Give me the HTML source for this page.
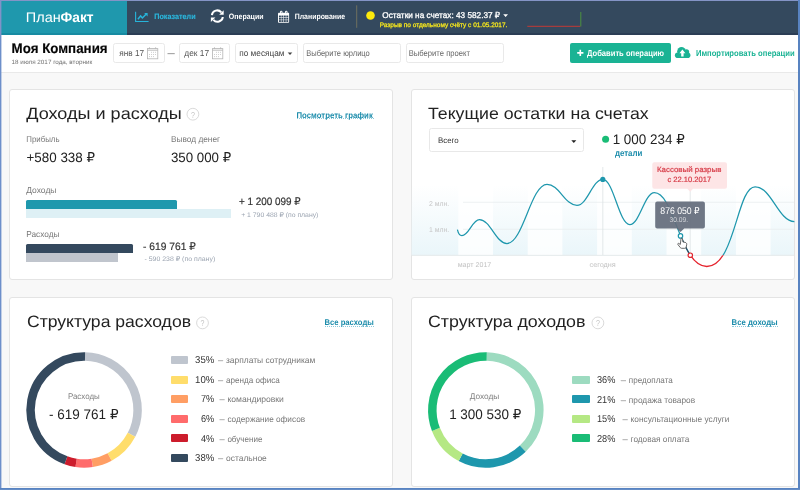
<!DOCTYPE html>
<html lang="ru"><head><meta charset="utf-8"><title>ПланФакт</title>
<style>
html,body{margin:0;padding:0}
body{width:800px;height:490px;overflow:hidden;position:relative;background:#f8f8f8;font-family:"Liberation Sans","DejaVu Sans",sans-serif}
.abs{position:absolute}
#hdr-logo{left:0;top:0;width:127px;height:35px;background:linear-gradient(180deg,#1f98ad 0,#1f98ad 33.3px,#178ba2 33.3px,#178ba2 34.8px,#8fc9d4 35px)}
#hdr-nav{left:127px;top:0;width:673px;height:35px;background:linear-gradient(180deg,#34495e 0,#34495e 33.3px,#2b3d55 33.3px,#2b3d55 34.8px,#98a1ad 35px)}
#sub{left:0;top:35px;width:800px;height:37px;background:#fff;border-bottom:1px solid #e9e9e9}
.box{position:absolute;top:43px;height:17.7px;border:1px solid #e9e9e9;border-radius:2.5px;background:#fff;box-sizing:content-box}
#btn-add{left:570px;top:43px;width:101px;height:19.5px;background:#1ab394;border-radius:2px}
.card{position:absolute;background:#fff;border:1px solid #e4e4e4;border-radius:3px;box-sizing:border-box}
.bar{position:absolute}
.dash{position:absolute;height:0;border-top:1px dotted #8ccadc}
.sw{position:absolute;width:17.5px;height:8.2px;border-radius:1px}
#sel{left:429.2px;top:127.7px;width:155.2px;height:24.5px;border:1px solid #e8e8e8;border-radius:2.5px;box-sizing:border-box;background:#fff}
.t{position:absolute;white-space:pre;display:block;transform-origin:0 0}
#gfx{position:absolute;left:0;top:0}
.fr{position:absolute;z-index:10}

</style></head>
<body>

<div class="abs" id="hdr-logo"></div>
<div class="abs" id="hdr-nav"></div>
<div class="abs" id="sub"></div>
<div class="box" style="left:113px;width:50px"></div>
<div class="box" style="left:178.5px;width:49.5px"></div>
<div class="box" style="left:235px;width:60.5px"></div>
<div class="box" style="left:302.5px;width:96.5px"></div>
<div class="box" style="left:405.5px;width:96.5px"></div>
<div class="abs" id="btn-add"></div>

<div class="card" style="left:9px;top:89px;width:384px;height:190.5px"></div>
<div class="card" style="left:410.5px;top:89px;width:384px;height:190.5px"></div>
<div class="card" style="left:9px;top:297px;width:384px;height:190px"></div>
<div class="card" style="left:410.5px;top:297px;width:384px;height:190px"></div>

<div class="bar" style="left:26px;top:200px;width:151px;height:9px;background:#1f98ad;border-radius:1.5px 1.5px 0 0"></div>
<div class="bar" style="left:26px;top:209px;width:204.5px;height:8.5px;background:#def0f5"></div>
<div class="bar" style="left:26px;top:244.2px;width:107px;height:8.8px;background:#34495e;border-radius:1.5px 1.5px 0 0"></div>
<div class="bar" style="left:26px;top:253px;width:92px;height:8.5px;background:#c0c5cd"></div>

<div class="dash" style="left:296.5px;top:117.8px;width:77px"></div>
<div class="dash" style="left:324.5px;top:325.8px;width:49.3px"></div>
<div class="dash" style="left:731.6px;top:325.8px;width:46px"></div>

<div class="abs" id="sel"></div>

<div class="sw" style="left:170.5px;top:356px;background:#bfc5ce"></div>
<div class="sw" style="left:170.5px;top:375.5px;background:#ffdd6b"></div>
<div class="sw" style="left:170.5px;top:395px;background:#ff9e64"></div>
<div class="sw" style="left:170.5px;top:414.8px;background:#ff6b6b"></div>
<div class="sw" style="left:170.5px;top:434.3px;background:#cc1c2c"></div>
<div class="sw" style="left:170.5px;top:453.8px;background:#34495e"></div>

<div class="sw" style="left:572px;top:375.5px;background:#9ddbc0"></div>
<div class="sw" style="left:572px;top:395.2px;background:#1e97ad"></div>
<div class="sw" style="left:572px;top:414.6px;background:#b5e884"></div>
<div class="sw" style="left:572px;top:434.3px;background:#1abc76"></div>

<svg id="gfx" width="800" height="490" viewBox="0 0 800 490">
<defs>
<linearGradient id="cg" x1="0" y1="0" x2="0" y2="1"><stop offset="0" stop-color="#eaf6fa" stop-opacity="0"/><stop offset="1" stop-color="#eaf6fa" stop-opacity="1"/></linearGradient>
<clipPath id="below"><rect x="689" y="255.3" width="40" height="20"/></clipPath>
<clipPath id="notred"><path d="M400 150H800V300H400Z M689 255.3H729V275.3H689Z" clip-rule="evenodd"/></clipPath>
<clipPath id="mid"><rect x="680" y="236" width="11" height="19.5"/></clipPath>
</defs>
<!-- header icons -->
<g fill="none" stroke="#27b4da" stroke-width="1.1">
<path d="M135.6 11.8V21.5H148.6"/>
<path d="M137.9 19.2L140.6 15.9L142.4 18L146 14.2" stroke-width="1.5"/>
<path d="M144.2 13H147.6V16.4Z" fill="#27b4da" stroke="none"/>
</g>
<g fill="none" stroke="#fff" stroke-width="2">
<path d="M211.9 15.2A5.3 5.3 0 0 1 221.3 12.4"/>
<path d="M222.8 17A5.3 5.3 0 0 1 213.4 19.8"/>
<path d="M223.7 10.2V14.7H219.2Z" fill="#fff" stroke="none"/>
<path d="M210.9 22V17.5H215.4Z" fill="#fff" stroke="none"/>
</g>
<g>
<rect x="278" y="12.7" width="11.1" height="10.1" rx="0.8" fill="#fff"/>
<rect x="280.0" y="10.7" width="2.5" height="3.4" rx="1.2" fill="#fff"/>
<rect x="285.0" y="10.7" width="2.5" height="3.4" rx="1.2" fill="#fff"/>
<rect x="280.9" y="11.6" width="0.7" height="1.6" rx="0.35" fill="#34495e" opacity="0.8"/>
<rect x="285.9" y="11.6" width="0.7" height="1.6" rx="0.35" fill="#34495e" opacity="0.8"/>
<rect x="278.95" y="15.55" width="1.95" height="1.8" fill="#34495e"/><rect x="281.40" y="15.55" width="1.95" height="1.8" fill="#34495e"/><rect x="283.85" y="15.55" width="1.95" height="1.8" fill="#34495e"/><rect x="286.30" y="15.55" width="1.95" height="1.8" fill="#34495e"/><rect x="278.95" y="17.85" width="1.95" height="1.8" fill="#34495e"/><rect x="281.40" y="17.85" width="1.95" height="1.8" fill="#34495e"/><rect x="283.85" y="17.85" width="1.95" height="1.8" fill="#34495e"/><rect x="286.30" y="17.85" width="1.95" height="1.8" fill="#34495e"/><rect x="278.95" y="20.15" width="1.95" height="1.8" fill="#34495e"/><rect x="281.40" y="20.15" width="1.95" height="1.8" fill="#34495e"/><rect x="283.85" y="20.15" width="1.95" height="1.8" fill="#34495e"/><rect x="286.30" y="20.15" width="1.95" height="1.8" fill="#34495e"/>
</g>
<path d="M356.7 5.3V27.8" stroke="#6f705f" stroke-width="1"/>
<circle cx="370.5" cy="15.5" r="4.3" fill="#fdea0c"/>
<path d="M503.2 14.3H508L505.6 16.9Z" fill="#fff"/>
<path d="M527.3 26.3H580.3" stroke="#c23a35" stroke-width="1"/>
<path d="M580.8 12V26.5" stroke="#4f9a3c" stroke-width="0.9"/>
<!-- subheader icons -->
<g transform="translate(147.10 48.20)" fill="none" stroke="#b4b4b4" stroke-width="0.8"><rect x="0.4" y="0.4" width="10.3" height="10.2"/><path d="M0.4 2.0H10.7" stroke-width="0.9"/><path d="M2.4 -0.9V0.6M8.5 -0.9V0.6" stroke-width="0.8"/><g fill="#cfcfcf" stroke="none"><rect x="3.9" y="3.6" width="1" height="1"/><rect x="5.9" y="3.6" width="1" height="1"/><rect x="7.9" y="3.6" width="1" height="1"/><rect x="1.9" y="5.8" width="1" height="1"/><rect x="3.9" y="5.8" width="1" height="1"/><rect x="5.9" y="5.8" width="1" height="1"/><rect x="7.9" y="5.8" width="1" height="1"/><rect x="1.9" y="7.9" width="1" height="1"/><rect x="3.9" y="7.9" width="1" height="1"/><rect x="5.9" y="7.9" width="1" height="1"/></g></g>
<g transform="translate(212.10 48.20)" fill="none" stroke="#b4b4b4" stroke-width="0.8"><rect x="0.4" y="0.4" width="10.3" height="10.2"/><path d="M0.4 2.0H10.7" stroke-width="0.9"/><path d="M2.4 -0.9V0.6M8.5 -0.9V0.6" stroke-width="0.8"/><g fill="#cfcfcf" stroke="none"><rect x="3.9" y="3.6" width="1" height="1"/><rect x="5.9" y="3.6" width="1" height="1"/><rect x="7.9" y="3.6" width="1" height="1"/><rect x="1.9" y="5.8" width="1" height="1"/><rect x="3.9" y="5.8" width="1" height="1"/><rect x="5.9" y="5.8" width="1" height="1"/><rect x="7.9" y="5.8" width="1" height="1"/><rect x="1.9" y="7.9" width="1" height="1"/><rect x="3.9" y="7.9" width="1" height="1"/><rect x="5.9" y="7.9" width="1" height="1"/></g></g>
<path d="M287.7 52.6H292.3L290 55Z" fill="#444"/>
<path d="M577.2 52.9H583.4M580.3 49.8V56" stroke="#fff" stroke-width="1.6"/>
<g fill="#1ab394">
<circle cx="681.5" cy="51.2" r="4.3"/><circle cx="686.5" cy="51.9" r="2.7"/>
<rect x="674.9" y="52.4" width="15.5" height="5.7" rx="2.8"/>
</g>
<path d="M682.4 49.6L685.4 53.2H683.6V56.5H681.2V53.2H679.4Z" fill="#fff"/>
<!-- ? icons -->
<circle cx="192.9" cy="114.2" r="5.9" fill="none" stroke="#d0d0d0" stroke-width="0.8"/>
<circle cx="202.5" cy="322.9" r="5.9" fill="none" stroke="#d0d0d0" stroke-width="0.8"/>
<circle cx="597.9" cy="322.9" r="5.9" fill="none" stroke="#d0d0d0" stroke-width="0.8"/>
<!-- select caret -->
<path d="M571.3 140.2H576.3L573.8 143Z" fill="#222"/>
<circle cx="605.6" cy="139.3" r="3.5" fill="#1abc76"/>
<!-- chart -->
<rect x="411.5" y="185" width="382.5" height="70.3" fill="url(#cg)"/>
<rect x="458.3" y="185" width="34.7" height="70.3" fill="#fff" opacity="0.8"/><rect x="527.7" y="185" width="34.7" height="70.3" fill="#fff" opacity="0.8"/><rect x="597.1" y="185" width="34.7" height="70.3" fill="#fff" opacity="0.8"/><rect x="666.5" y="185" width="34.7" height="70.3" fill="#fff" opacity="0.8"/><rect x="735.9" y="185" width="34.7" height="70.3" fill="#fff" opacity="0.8"/>
<path d="M463 202.3H794M463 229.3H794" stroke="#e9eef0" stroke-width="0.8"/>
<path d="M411.5 255.4H794" stroke="#e3e8ea" stroke-width="0.9"/>
<path d="M602.8 167V255" stroke="#dde2e4" stroke-width="0.8"/>
<path d="M690.2 189V255" stroke="#dde2e4" stroke-width="0.8"/>
<path d="M457.4 229.6 C458.2 233 459.6 235.6 461.9 235.6 C468.90 235.60 472.40 219.60 479.40 219.60 C490.44 219.60 495.96 243.50 507.00 243.50 C523.00 243.50 531.00 184.30 547.00 184.30 C559.00 184.30 565.00 205.40 577.00 205.40 C587.32 205.40 592.48 179.40 602.80 179.40 C613.60 179.40 619.00 224.50 629.80 224.50 C639.64 224.50 644.56 192.70 654.40 192.70 C674.31 192.70 680.08 266.50 706.80 266.50 C735.30 266.50 736.75 186.80 755.10 186.80 C771.61 186.80 777.89 221.00 794.40 221.60" fill="none" stroke="#1e97ad" stroke-width="1.25" clip-path="url(#notred)"/>
<path d="M457.4 229.6 C458.2 233 459.6 235.6 461.9 235.6 C468.90 235.60 472.40 219.60 479.40 219.60 C490.44 219.60 495.96 243.50 507.00 243.50 C523.00 243.50 531.00 184.30 547.00 184.30 C559.00 184.30 565.00 205.40 577.00 205.40 C587.32 205.40 592.48 179.40 602.80 179.40 C613.60 179.40 619.00 224.50 629.80 224.50 C639.64 224.50 644.56 192.70 654.40 192.70 C674.31 192.70 680.08 266.50 706.80 266.50 C735.30 266.50 736.75 186.80 755.10 186.80 C771.61 186.80 777.89 221.00 794.40 221.60" fill="none" stroke="#34495e" stroke-width="1.15" clip-path="url(#mid)"/>
<path d="M457.4 229.6 C458.2 233 459.6 235.6 461.9 235.6 C468.90 235.60 472.40 219.60 479.40 219.60 C490.44 219.60 495.96 243.50 507.00 243.50 C523.00 243.50 531.00 184.30 547.00 184.30 C559.00 184.30 565.00 205.40 577.00 205.40 C587.32 205.40 592.48 179.40 602.80 179.40 C613.60 179.40 619.00 224.50 629.80 224.50 C639.64 224.50 644.56 192.70 654.40 192.70 C674.31 192.70 680.08 266.50 706.80 266.50 C735.30 266.50 736.75 186.80 755.10 186.80 C771.61 186.80 777.89 221.00 794.40 221.60" fill="none" stroke="#e5242e" stroke-width="1.3" clip-path="url(#below)"/>
<circle cx="602.8" cy="179.4" r="2.6" fill="#1e97ad"/>
<!-- red tooltip -->
<path d="M654.3 162.2H725a2 2 0 0 1 2 2V186.8a2 2 0 0 1 -2 2H693L690.2 191.8L687.4 188.8H654.3a2 2 0 0 1 -2 -2V164.2a2 2 0 0 1 2 -2Z" fill="#fde5e6"/>
<!-- gray tooltip -->
<path d="M657.2 201.5H702.9a2 2 0 0 1 2 2V226.6a2 2 0 0 1 -2 2H684.2L680.5 232L676.8 228.6H657.2a2 2 0 0 1 -2 -2V203.5a2 2 0 0 1 2 -2Z" fill="#646d7c" fill-opacity="0.93"/>
<circle cx="680.5" cy="235.9" r="2.2" fill="#fff" stroke="#1e97ad" stroke-width="1.2"/>
<circle cx="690.3" cy="255.2" r="2.2" fill="#fff" stroke="#e0262f" stroke-width="1.2"/>
<!-- hand cursor -->
<path d="M681 238.6c.7-.5 1.500-.1 1.600.7l.3 2.600 2.300.5c1.200.3 1.700 1.200 1.500 2.400l-.6 2.500c-.2.700-.7 1-1.400 1h-3c-.6 0-1-.2-1.400-.7l-2.400-3.100c-.5-.7.300-1.500 1-1l1.400 1z" fill="#fff" stroke="#444" stroke-width="0.8" stroke-linejoin="round"/>
<!-- donuts -->
<path d="M85.03 356.51 A53.50 53.50 0 0 1 131.51 434.79" fill="none" stroke="#bfc5ce" stroke-width="8.50"/>
<path d="M131.51 434.79 A53.50 53.50 0 0 1 109.63 457.02" fill="none" stroke="#ffdd6b" stroke-width="8.50"/>
<path d="M109.63 457.02 A53.50 53.50 0 0 1 92.19 462.88" fill="none" stroke="#ff9e64" stroke-width="8.50"/>
<path d="M92.19 462.88 A53.50 53.50 0 0 1 76.10 462.90" fill="none" stroke="#ff6b6b" stroke-width="8.50"/>
<path d="M76.10 462.90 A53.50 53.50 0 0 1 65.98 460.34" fill="none" stroke="#cc1c2c" stroke-width="8.50"/>
<path d="M65.98 460.34 A53.50 53.50 0 0 1 85.03 356.51" fill="none" stroke="#34495e" stroke-width="8.50"/>
<path d="M486.73 356.51 A53.50 53.50 0 0 1 522.76 448.68" fill="none" stroke="#9ddbc0" stroke-width="8.50"/>
<path d="M522.76 448.68 A53.50 53.50 0 0 1 460.68 457.24" fill="none" stroke="#1e97ad" stroke-width="8.50"/>
<path d="M460.68 457.24 A53.50 53.50 0 0 1 435.92 429.35" fill="none" stroke="#b5e884" stroke-width="8.50"/>
<path d="M435.92 429.35 A53.50 53.50 0 0 1 486.73 356.51" fill="none" stroke="#1abc76" stroke-width="8.50"/>
</svg>
<div class="fr" style="left:0;top:0;width:800px;height:1.2px;background:#8494c6"></div>
<div class="fr" style="left:0;top:0;width:1px;height:490px;background:linear-gradient(180deg,#8092c8 0,#8092c8 35px,#6d8fca 36px,#6d8fca 100%)"></div>
<div class="fr" style="left:1px;top:0;width:1px;height:490px;opacity:0.4;background:linear-gradient(180deg,#8092c8 0,#8092c8 35px,#6d8fca 36px,#6d8fca 100%)"></div>
<div class="fr" style="left:797.7px;top:0;width:2.3px;height:490px;background:#5883c1"></div>
<div class="fr" style="left:0;top:487.7px;width:800px;height:2.3px;background:linear-gradient(180deg,#5883c1 0,#5883c1 70%,#a9c0e1 100%)"></div>

<svg id="texts" width="800" height="490" viewBox="0 0 800 490" font-family='"Liberation Sans", "DejaVu Sans", sans-serif' style="position:absolute;left:0;top:0;z-index:5;will-change:transform;text-rendering:geometricPrecision">
<text transform="translate(25.87 21.90) scale(1.0338 1)" font-size="14.00" fill="#fff">План</text>
<text transform="translate(60.50 21.90) scale(0.9854 1)" font-size="14.00" fill="#fff" font-weight="700">Факт</text>
<text transform="translate(154.25 18.75) scale(0.9250 1)" font-size="7.80" fill="#2bb6dc" font-weight="700" stroke="#2bb6dc" stroke-width="0.15">Показатели</text>
<text transform="translate(228.80 18.75) scale(0.8996 1)" font-size="7.80" fill="#fff" font-weight="700">Операции</text>
<text transform="translate(294.75 18.75) scale(0.8877 1)" font-size="7.80" fill="#fff" font-weight="700">Планирование</text>
<text transform="translate(382.30 18.30) scale(0.9814 1)" font-size="8.40" fill="#fff" stroke="#fff" stroke-width="0.3">Остатки на счетах: 43 582.37 ₽</text>
<text transform="translate(379.75 26.70) scale(0.9949 1)" font-size="6.50" fill="#f7e71c" stroke="#f7e71c" stroke-width="0.25">Разрыв по отдельному счёту с 01.05.2017.</text>
<text transform="translate(11.60 52.90) scale(0.9596 1)" font-size="13.90" fill="#050505" font-weight="700" stroke="#050505" stroke-width="0.15">Моя Компания</text>
<text transform="translate(11.60 63.70) scale(1.0200 1)" font-size="6.20" fill="#727272">18 июля 2017 года, вторник</text>
<text transform="translate(119.25 56.25) scale(0.9483 1)" font-size="8.70" fill="#555">янв 17</text>
<text transform="translate(167.50 56.00) scale(0.8333 1)" font-size="8.70" fill="#555">—</text>
<text transform="translate(184.25 56.25) scale(0.9635 1)" font-size="8.70" fill="#555">дек 17</text>
<text transform="translate(239.25 56.25) scale(0.9504 1)" font-size="8.70" fill="#444">по месяцам</text>
<text transform="translate(306.25 56.25) scale(0.8862 1)" font-size="8.50" fill="#666">Выберите юрлицо</text>
<text transform="translate(408.75 56.25) scale(0.8976 1)" font-size="8.50" fill="#666">Выберите проект</text>
<text transform="translate(587.00 56.25) scale(0.8840 1)" font-size="8.60" fill="#fff" font-weight="700">Добавить операцию</text>
<text transform="translate(695.90 56.25) scale(0.8894 1)" font-size="8.60" fill="#1ab394" font-weight="700">Импортировать операции</text>
<text transform="translate(26.25 118.75) scale(1.0941 1)" font-size="16.50" fill="#222">Доходы и расходы</text>
<text transform="translate(296.50 117.50) scale(0.9399 1)" font-size="8.30" fill="#1b8cab" font-weight="700">Посмотреть график</text>
<text transform="translate(26.25 141.75) scale(0.9241 1)" font-size="8.50" fill="#787878">Прибыль</text>
<text transform="translate(26.50 161.80) scale(0.9849 1)" font-size="13.60" fill="#222">+580 338 ₽</text>
<text transform="translate(171.00 141.75) scale(0.9767 1)" font-size="8.50" fill="#787878">Вывод денег</text>
<text transform="translate(170.90 161.80) scale(0.9788 1)" font-size="13.60" fill="#222">350 000 ₽</text>
<text transform="translate(26.25 192.50) scale(0.9867 1)" font-size="8.60" fill="#787878">Доходы</text>
<text transform="translate(238.90 204.60) scale(0.9277 1)" font-size="10.70" fill="#333" stroke="#333" stroke-width="0.2">+ 1 200 099 ₽</text>
<text transform="translate(241.20 217.00) scale(1.0382 1)" font-size="6.60" fill="#9aa3b0">+ 1 790 488 ₽ (по плану)</text>
<text transform="translate(26.25 236.50) scale(0.9613 1)" font-size="8.60" fill="#787878">Расходы</text>
<text transform="translate(143.10 249.60) scale(0.9577 1)" font-size="10.70" fill="#333" stroke="#333" stroke-width="0.2">- 619 761 ₽</text>
<text transform="translate(144.50 260.90) scale(1.0521 1)" font-size="6.60" fill="#9aa3b0">- 590 238 ₽ (по плану)</text>
<text transform="translate(428.00 118.75) scale(1.0730 1)" font-size="16.50" fill="#222">Текущие остатки на счетах</text>
<text transform="translate(438.00 143.30) scale(0.9871 1)" font-size="8.00" fill="#333">Всего</text>
<text transform="translate(612.63 143.90) scale(0.9739 1)" font-size="13.80" fill="#222">1 000 234 ₽</text>
<text transform="translate(614.90 155.50) scale(0.8989 1)" font-size="8.80" fill="#1b8cab" font-weight="700">детали</text>
<text transform="translate(429.00 205.80) scale(0.9854 1)" font-size="7.00" fill="#c6c6c6">2 млн.</text>
<text transform="translate(429.00 232.30) scale(0.9854 1)" font-size="7.00" fill="#c6c6c6">1 млн.</text>
<text transform="translate(457.70 266.70) scale(1.0128 1)" font-size="7.00" fill="#c2c2c2">март 2017</text>
<text transform="translate(589.60 266.70) scale(1.0360 1)" font-size="7.00" fill="#c2c2c2">сегодня</text>
<text transform="translate(657.00 172.40) scale(1.0385 1)" font-size="7.60" fill="#d63a46" stroke="#d63a46" stroke-width="0.2">Кассовый разрыв</text>
<text transform="translate(667.40 182.20) scale(0.9980 1)" font-size="7.60" fill="#d63a46" stroke="#d63a46" stroke-width="0.2">с 22.10.2017</text>
<text transform="translate(660.30 213.60) scale(0.9044 1)" font-size="9.60" fill="#fff">876 050 ₽</text>
<text transform="translate(669.40 222.40) scale(0.9633 1)" font-size="7.00" fill="#d0d3d8">30.09.</text>
<text transform="translate(27.00 327.00) scale(1.0655 1)" font-size="16.50" fill="#222">Структура расходов</text>
<text transform="translate(324.50 325.00) scale(0.9232 1)" font-size="8.30" fill="#1b8cab" font-weight="700">Все расходы</text>
<text transform="translate(67.90 398.80) scale(0.9700 1)" font-size="8.20" fill="#808080">Расходы</text>
<text transform="translate(49.00 418.60) scale(0.9799 1)" font-size="13.80" fill="#222">- 619 761 ₽</text>
<text transform="translate(195.10 363.30) scale(0.9591 1)" font-size="10.00" fill="#333">35%</text>
<text transform="translate(218.00 363.30) scale(0.6000 1)" font-size="8.60" fill="#777">—</text>
<text transform="translate(226.00 363.30) scale(0.9807 1)" font-size="8.60" fill="#777">зарплаты сотрудникам</text>
<text transform="translate(195.10 382.80) scale(0.9591 1)" font-size="10.00" fill="#333">10%</text>
<text transform="translate(218.00 382.80) scale(0.6000 1)" font-size="8.60" fill="#777">—</text>
<text transform="translate(226.00 382.80) scale(0.9438 1)" font-size="8.60" fill="#777">аренда офиса</text>
<text transform="translate(201.00 402.30) scale(0.9202 1)" font-size="10.00" fill="#333">7%</text>
<text transform="translate(219.40 402.30) scale(0.6000 1)" font-size="8.60" fill="#777">—</text>
<text transform="translate(227.40 402.30) scale(0.9970 1)" font-size="8.60" fill="#777">командировки</text>
<text transform="translate(201.00 422.10) scale(0.9202 1)" font-size="10.00" fill="#333">6%</text>
<text transform="translate(219.40 422.10) scale(0.6000 1)" font-size="8.60" fill="#777">—</text>
<text transform="translate(227.40 422.10) scale(0.9568 1)" font-size="8.60" fill="#777">содержание офисов</text>
<text transform="translate(201.00 441.60) scale(0.9202 1)" font-size="10.00" fill="#333">4%</text>
<text transform="translate(219.40 441.60) scale(0.6000 1)" font-size="8.60" fill="#777">—</text>
<text transform="translate(227.40 441.60) scale(0.9359 1)" font-size="8.60" fill="#777">обучение</text>
<text transform="translate(195.10 461.10) scale(0.9591 1)" font-size="10.00" fill="#333">38%</text>
<text transform="translate(218.00 461.10) scale(0.6000 1)" font-size="8.60" fill="#777">—</text>
<text transform="translate(226.00 461.10) scale(0.9829 1)" font-size="8.60" fill="#777">остальное</text>
<text transform="translate(428.00 327.00) scale(1.0789 1)" font-size="16.50" fill="#222">Структура доходов</text>
<text transform="translate(731.60 325.00) scale(0.9333 1)" font-size="8.30" fill="#1b8cab" font-weight="700">Все доходы</text>
<text transform="translate(469.70 398.80) scale(1.0154 1)" font-size="8.20" fill="#808080">Доходы</text>
<text transform="translate(449.13 418.80) scale(0.9694 1)" font-size="13.90" fill="#222">1 300 530 ₽</text>
<text transform="translate(597.00 382.80) scale(0.9193 1)" font-size="10.00" fill="#333">36%</text>
<text transform="translate(620.75 382.80) scale(0.6111 1)" font-size="8.60" fill="#777">—</text>
<text transform="translate(628.85 382.80) scale(0.9411 1)" font-size="8.60" fill="#777">предоплата</text>
<text transform="translate(597.00 402.60) scale(0.9193 1)" font-size="10.00" fill="#333">21%</text>
<text transform="translate(620.75 402.60) scale(0.6111 1)" font-size="8.60" fill="#777">—</text>
<text transform="translate(628.85 402.60) scale(0.9637 1)" font-size="8.60" fill="#777">продажа товаров</text>
<text transform="translate(597.00 421.95) scale(0.9193 1)" font-size="10.00" fill="#333">15%</text>
<text transform="translate(622.50 421.95) scale(0.6111 1)" font-size="8.60" fill="#777">—</text>
<text transform="translate(630.60 421.95) scale(0.9648 1)" font-size="8.60" fill="#777">консультационные услуги</text>
<text transform="translate(597.00 441.60) scale(0.9193 1)" font-size="10.00" fill="#333">28%</text>
<text transform="translate(622.50 441.60) scale(0.6111 1)" font-size="8.60" fill="#777">—</text>
<text transform="translate(630.60 441.60) scale(0.9578 1)" font-size="8.60" fill="#777">годовая оплата</text>
<text transform="translate(190.90 117.50) scale(0.8200 1)" font-size="8.60" fill="#c4c4c4">?</text>
<text transform="translate(200.50 326.20) scale(0.8200 1)" font-size="8.60" fill="#c4c4c4">?</text>
<text transform="translate(595.90 326.20) scale(0.8200 1)" font-size="8.60" fill="#c4c4c4">?</text>
</svg>
</body></html>
